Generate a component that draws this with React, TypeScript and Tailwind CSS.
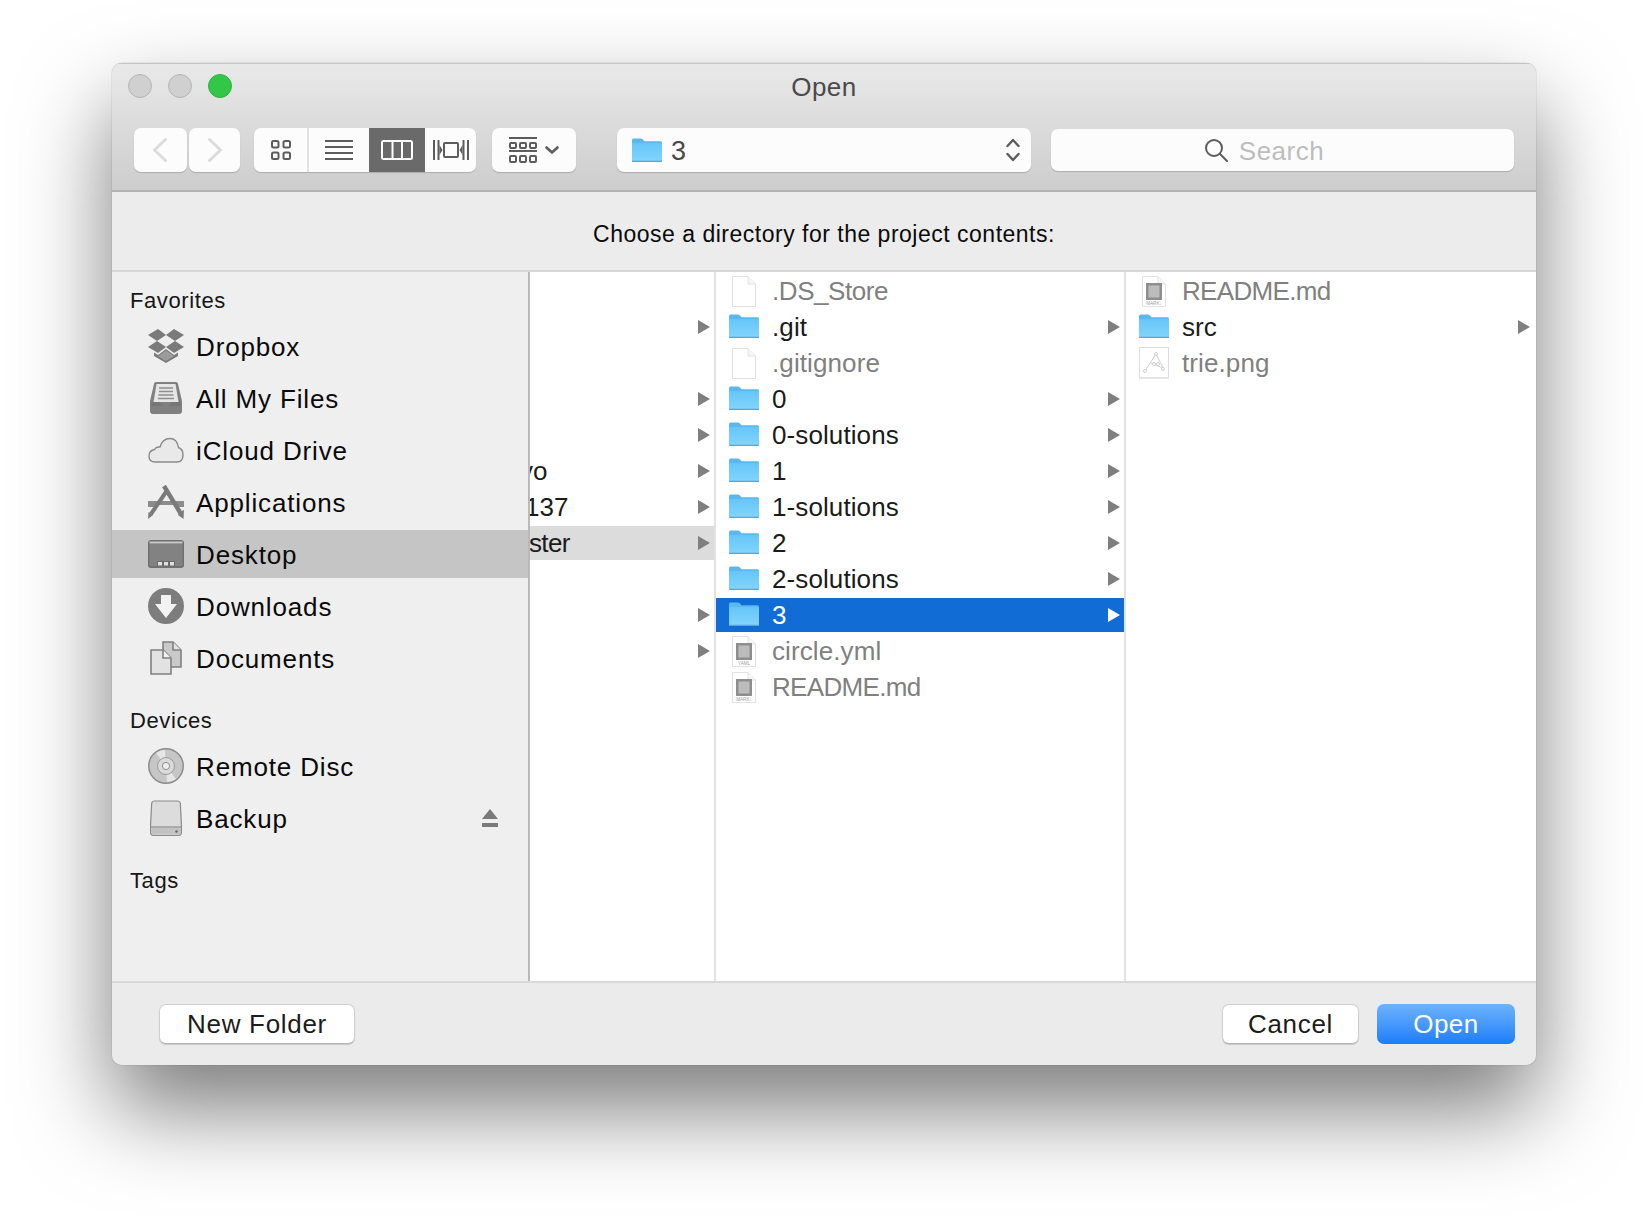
import React from "react";

const Folder = ({ className = "" }: { className?: string }) => (
  <svg viewBox="0 0 30 24" className={`w-[30px] h-[24px] shrink-0 ${className}`}>
    <defs>
      <linearGradient id="fg" x1="0" y1="0" x2="0" y2="1">
        <stop offset="0" stopColor="#66c6f8" />
        <stop offset="1" stopColor="#82d4fd" />
      </linearGradient>
    </defs>
    <path d="M0 2 Q0 0.5 1.5 0.5 H9 Q10.5 0.5 11.5 2 L12.5 3.2 H28.5 Q30 3.2 30 4.7 V22.5 Q30 24 28.5 24 H1.5 Q0 24 0 22.5 Z" fill="#5ab8ee" />
    <path d="M0 5 H30 V22 Q30 23.2 28.5 23.2 H1.5 Q0 23.2 0 22 Z" fill="url(#fg)" />
    <rect x="0" y="22.8" width="30" height="1.2" rx="0.6" fill="#5aa5d6" />
  </svg>
);

const Doc = ({ children }: { children?: React.ReactNode }) => (
  <svg viewBox="0 0 24 31" className="w-[24px] h-[31px] shrink-0">
    <path d="M0.5 0.5 H16 L23.5 8 V30.5 H0.5 Z" fill="#fff" stroke="#e2e2e2" />
    <path d="M16 0.5 V8 H23.5" fill="#f6f6f6" stroke="#e2e2e2" />
    {children}
  </svg>
);

const TextDoc = ({ label }: { label: string }) => (
  <Doc>
    <rect x="4" y="7" width="16" height="17" fill="#8e8e8e" />
    <rect x="6.5" y="9.5" width="11" height="12" fill="#bcbcbc" />
    <text x="12" y="29" textAnchor="middle" fontSize="4.6" fill="#a0a0a0" fontFamily="Liberation Sans, sans-serif">
      {label}
    </text>
  </Doc>
);

const PngDoc = () => (
  <svg viewBox="0 0 30 32" className="w-[30px] h-[32px] shrink-0">
    <rect x="0.5" y="0.5" width="29" height="30" fill="#fff" stroke="#dcdcdc" />
    <rect x="0" y="30.5" width="30" height="1.5" fill="#e8e8e8" />
    <g fill="none" stroke="#cfcfcf" strokeWidth="1">
      <path d="M17 7 L6 24 M17 7 L24 21 M12 16 L24 21" />
      <circle cx="17" cy="7" r="1.5" fill="#fff" />
      <circle cx="15" cy="17" r="1.5" fill="#fff" />
      <circle cx="19" cy="17" r="1.5" fill="#fff" />
      <circle cx="6" cy="24" r="1.5" fill="#fff" />
      <circle cx="24" cy="22" r="1.5" fill="#fff" />
    </g>
  </svg>
);

const Arrow = ({ white = false, right = "mr-[4px]" }: { white?: boolean; right?: string }) => (
  <svg viewBox="0 0 12 14" className={`w-[12px] h-[14px] shrink-0 ml-auto ${right}`}>
    <path d="M0 0 L12 7 L0 14 Z" fill={white ? "#ffffff" : "#7f7f7f"} />
  </svg>
);

const Dropbox = () => (
  <svg viewBox="0 0 36 34" className="w-[36px] h-[34px]" fill="#7a7a7a">
    <path d="M10 0 L18 6 L9 12 L0 6 Z" />
    <path d="M26 0 L36 6 L27 12 L18 6 Z" />
    <path d="M9 12 L18 18 L10 24 L0 18 Z" />
    <path d="M27 12 L36 18 L26 24 L18 18 Z" />
    <path d="M18 20 L26 26 L30 23.5 V27 L18 34 L6 27 V23.5 L10 26 Z" />
    <path d="M18 21.5 L10 27 L18 32 L26 27 Z" fill="#9c9c9c" />
  </svg>
);

const AllFiles = () => (
  <svg viewBox="0 0 32 32" className="w-[32px] h-[32px]">
    <path d="M4 2 Q4 0 6 0 H26 Q28 0 28 2 L32 19 V29 Q32 32 29 32 H3 Q0 32 0 29 V19 Z" fill="#808080" />
    <path d="M6.5 2 H25.5 L28.5 20 H3.5 Z" fill="#e6e6e6" />
    <path d="M9 6 H23 M9 9.5 H23 M8.5 13 H23.5 M8 16.5 H24" stroke="#8f8f8f" strokeWidth="1.4" />
    <path d="M1.5 20 H10 Q11 24 16 24 Q21 24 22 20 H30.5 V24 H1.5 Z" fill="#6e6e6e" opacity="0.55" />
  </svg>
);

const Cloud = () => (
  <svg viewBox="0 0 36 26" className="w-[36px] h-[26px]">
    <path d="M7 25 Q1 25 1 19 Q1 13.5 6.5 12.5 Q8 9.5 12 10 Q14.5 1.5 22 1.5 Q29 1.5 30.5 10.5 Q35 12 35 18 Q35 25 29 25 Z" fill="#e9e9e9" stroke="#8a8a8a" strokeWidth="1.4" />
  </svg>
);

const Apps = () => (
  <svg viewBox="0 0 36 34" className="w-[36px] h-[34px]">
    <path d="M6 16 H30 L36 16 V22 H30 L28 20 H8 L6 22 H0 V16 Z" fill="#8c8c8c" />
    <path d="M16 1 L33 29" stroke="#7a7a7a" strokeWidth="4.4" />
    <path d="M32 27 L36 25 L35.5 34 L30 30 Z" fill="#7a7a7a" />
    <path d="M18 7 L3 29" stroke="#7a7a7a" strokeWidth="4" />
    <path d="M0 34 L0.5 27 L5 30 Z" fill="#7a7a7a" />
  </svg>
);

const DesktopIcon = () => (
  <svg viewBox="0 0 36 28" className="w-[36px] h-[28px]">
    <rect x="0" y="0" width="36" height="28" rx="3" fill="#707070" />
    <rect x="1.5" y="1.5" width="33" height="2" fill="#c8c8c8" />
    <rect x="1.5" y="4" width="33" height="22" rx="1" fill="#828282" />
    <rect x="9" y="21" width="18" height="5" fill="#6a6a6a" />
    <rect x="10" y="22" width="4" height="3.5" fill="#e0e0e0" />
    <rect x="16" y="22" width="4" height="3.5" fill="#e0e0e0" />
    <rect x="22" y="22" width="4" height="3.5" fill="#e0e0e0" />
  </svg>
);

const DownloadIcon = () => (
  <svg viewBox="0 0 36 36" className="w-[36px] h-[36px]">
    <circle cx="18" cy="18" r="18" fill="#7d7d7d" />
    <path d="M13 7 H23 V16 H29 L18 30 L7 16 H13 Z" fill="#f2f2f2" />
  </svg>
);

const DocsIcon = () => (
  <svg viewBox="0 0 32 34" className="w-[32px] h-[34px]" stroke="#808080" strokeWidth="1.6">
    <path d="M13 1 H23 L31 9 V26 H13 Z" fill="#c9c9c9" />
    <path d="M23 1 V9 H31" fill="#e4e4e4" />
    <path d="M1 9 H13 L21 17 V33 H1 Z" fill="#e2e2e2" />
    <path d="M13 9 V17 H21" fill="#f2f2f2" />
  </svg>
);

const Disc = () => (
  <svg viewBox="0 0 36 36" className="w-[36px] h-[36px]">
    <circle cx="18" cy="18" r="17.2" fill="#c6c6c6" stroke="#8c8c8c" strokeWidth="1.5" />
    <path d="M18 18 L8 5 A17 17 0 0 1 17 2 Z M18 18 L28 31 A17 17 0 0 1 19 34 Z" fill="#e6e6e6" />
    <circle cx="18" cy="18" r="8.5" fill="#dadada" stroke="#9a9a9a" />
    <circle cx="18" cy="18" r="3.6" fill="#efefef" stroke="#8c8c8c" />
  </svg>
);

const Drive = () => (
  <svg viewBox="0 0 32 36" className="w-[32px] h-[36px]">
    <path d="M4 1 H28 Q30 1 30.3 3 L31.5 26 V32 Q31.5 35.5 28 35.5 H4 Q0.5 35.5 0.5 32 V26 L1.7 3 Q2 1 4 1 Z" fill="#dcdcdc" stroke="#8a8a8a" strokeWidth="1.2" />
    <path d="M1 27 H31" stroke="#8a8a8a" strokeWidth="1.2" />
    <rect x="1" y="28" width="30" height="6.5" rx="2" fill="#c2c2c2" />
    <circle cx="26.5" cy="31.5" r="1.2" fill="#666" />
  </svg>
);

const Eject = () => (
  <svg viewBox="0 0 16 18" className="w-[16px] h-[18px] shrink-0 ml-auto mr-[30px]" fill="#7a7a7a">
    <path d="M8 0 L16 10 H0 Z" />
    <rect x="0" y="14" width="16" height="4" />
  </svg>
);

type SideItem = { label: string; icon: React.ReactNode; selected?: boolean; eject?: boolean };

const SideRow = ({ label, icon, selected, eject }: SideItem) => (
  <div className={`flex items-center h-[48px] pl-[36px] ${selected ? "bg-[#c5c5c5]" : ""}`}>
    <div className="w-[36px] flex justify-center shrink-0">{icon}</div>
    <span className="ml-[12px] pt-[2px] text-[26px] tracking-[0.85px] text-[#0a0a0a]">{label}</span>
    {eject && <Eject />}
  </div>
);

const Header = ({ children, className = "" }: { children: React.ReactNode; className?: string }) => (
  <div className={`pl-[18px] text-[22px] tracking-[0.6px] leading-[28px] text-[#161616] ${className}`}>{children}</div>
);

type Row = { name: string; kind: "folder" | "blank" | "yml" | "md" | "png"; selected?: boolean; track?: string };

const FileRow = ({ name, kind, selected, pad, track, arrowRight }: Row & { pad: string; arrowRight?: string }) => {
  const isFolder = kind === "folder";
  return (
    <div className={`flex items-center h-[34px] ${pad} ${selected ? "bg-[#116cd6]" : ""}`}>
      <div className="w-[30px] h-[34px] flex justify-center items-center shrink-0">
        {isFolder && <Folder className="-mt-[2px]" />}
        {kind === "blank" && <Doc />}
        {kind === "yml" && <TextDoc label="YAML" />}
        {kind === "md" && <TextDoc label="MARK↓" />}
        {kind === "png" && <PngDoc />}
      </div>
      <span
        className={`ml-[13px] text-[26px] ${track ?? "tracking-[0.1px]"} ${
          selected ? "text-white" : isFolder ? "text-[#1b1b1b]" : "text-[#808080]"
        }`}
      >
        {name}
      </span>
      {isFolder && <Arrow white={selected} right={arrowRight} />}
    </div>
  );
};

const col2: Row[] = [
  { name: ".DS_Store", kind: "blank", track: "tracking-[-0.43px]" },
  { name: ".git", kind: "folder" },
  { name: ".gitignore", kind: "blank" },
  { name: "0", kind: "folder" },
  { name: "0-solutions", kind: "folder" },
  { name: "1", kind: "folder" },
  { name: "1-solutions", kind: "folder" },
  { name: "2", kind: "folder" },
  { name: "2-solutions", kind: "folder" },
  { name: "3", kind: "folder", selected: true },
  { name: "circle.yml", kind: "yml" },
  { name: "README.md", kind: "md", track: "tracking-[-0.67px]" },
];

const col3: Row[] = [
  { name: "README.md", kind: "md", track: "tracking-[-0.67px]" },
  { name: "src", kind: "folder" },
  { name: "trie.png", kind: "png" },
];

const col1: { text?: string; shift?: string; arrow?: boolean; selected?: boolean }[] = [
  {},
  { arrow: true },
  {},
  { arrow: true },
  { arrow: true },
  { text: "vo", shift: "-ml-[10px]", arrow: true },
  { text: "137", shift: "-ml-[5px]", arrow: true },
  { text: "master", shift: "-ml-[36px] tracking-[-0.6px]", arrow: true, selected: true },
  {},
  { arrow: true },
  { arrow: true },
];

const ToolBtn = ({
  className = "",
  bg = "bg-[#fcfcfc]",
  shadow = "shadow-[0_1px_1px_rgba(0,0,0,0.18)]",
  height = "h-[44px]",
  children,
}: {
  className?: string;
  bg?: string;
  shadow?: string;
  height?: string;
  children?: React.ReactNode;
}) => <div className={`flex items-center justify-center ${height} ${bg} ${shadow} ${className}`}>{children}</div>;

const FooterBtn = ({ children, className = "" }: { children: React.ReactNode; className?: string }) => (
  <div className={`h-[40px] rounded-[7px] bg-white border border-[#cfcfcf] border-b-[#b5b5b5] shadow-[0_1px_1px_rgba(0,0,0,0.15)] flex items-center justify-center text-[26px] tracking-[0.7px] text-[#1c1c1c] ${className}`}>
    {children}
  </div>
);

export default function App() {
  const sans = "font-['Liberation_Sans',Arial,sans-serif]";
  return (
    <div className={`w-[1648px] h-[1224px] bg-white pl-[112px] pt-[63px] overflow-hidden ${sans}`}>
      <div className="w-[1424px] h-[1002px] rounded-[10px] overflow-hidden flex flex-col bg-[#ececec] shadow-[0_44px_90px_rgba(0,0,0,0.52),0_0_1px_rgba(0,0,0,0.5)]">
        {/* Title bar */}
        <div className="h-[129px] shrink-0 flex flex-col bg-gradient-to-b from-[#e9e9e9] to-[#cdcdcd] border-t border-t-[#c4c4c4] border-b-2 border-b-[#b3b3b3]">
          <div className="relative h-[64px] shrink-0 flex items-start pt-[10px] pl-[16px] gap-[16px]">
            <div className="w-[24px] h-[24px] rounded-full bg-[#d0d0d0] border border-[#b5b5b5]" />
            <div className="w-[24px] h-[24px] rounded-full bg-[#d0d0d0] border border-[#b5b5b5]" />
            <div className="w-[24px] h-[24px] rounded-full bg-[#33c748] border border-[#2db440]" />
            <div className="absolute inset-x-0 top-[4px] text-center text-[26px] tracking-[0.5px] leading-[38px] text-[#4a4a4a]">Open</div>
          </div>
          <div className="flex items-center pl-[22px]">
            <ToolBtn className="w-[53px] rounded-[7px]">
              <svg viewBox="0 0 14 24" className="w-[14px] h-[24px] -ml-[2px]" fill="none" stroke="#dcdcdc" strokeWidth="3" strokeLinecap="round" strokeLinejoin="round">
                <path d="M12.5 1.5 L1.5 12 L12.5 22.5" />
              </svg>
            </ToolBtn>
            <ToolBtn className="w-[51px] ml-[2px] rounded-[7px]">
              <svg viewBox="0 0 14 24" className="w-[14px] h-[24px]" fill="none" stroke="#dcdcdc" strokeWidth="3" strokeLinecap="round" strokeLinejoin="round">
                <path d="M1.5 1.5 L12.5 12 L1.5 22.5" />
              </svg>
            </ToolBtn>
            <div className="flex ml-[14px] rounded-[7px] overflow-hidden shadow-[0_1px_1px_rgba(0,0,0,0.18)]">
              <ToolBtn className="w-[55px] border-r-2 border-[#e2e2e2]" shadow="">
                <svg viewBox="0 0 20 20" className="w-[20px] h-[20px]" fill="none" stroke="#5c5c5c" strokeWidth="2">
                  <rect x="1" y="1" width="6.5" height="6.5" rx="1.5" />
                  <rect x="12.5" y="1" width="6.5" height="6.5" rx="1.5" />
                  <rect x="1" y="12.5" width="6.5" height="6.5" rx="1.5" />
                  <rect x="12.5" y="12.5" width="6.5" height="6.5" rx="1.5" />
                </svg>
              </ToolBtn>
              <ToolBtn className="w-[60px]" shadow="">
                <svg viewBox="0 0 28 20" className="w-[28px] h-[20px]" fill="#5c5c5c">
                  <rect y="0" width="28" height="2" />
                  <rect y="6" width="28" height="2" />
                  <rect y="12" width="28" height="2" />
                  <rect y="18" width="28" height="2" />
                </svg>
              </ToolBtn>
              <ToolBtn className="w-[56px]" bg="bg-[#6a6a6a]" shadow="">
                <svg viewBox="0 0 32 20" className="w-[32px] h-[20px]" fill="none" stroke="#fff" strokeWidth="2">
                  <rect x="1" y="1" width="30" height="18" rx="1.5" />
                  <path d="M11.5 1 V19 M21 1 V19" />
                </svg>
              </ToolBtn>
              <ToolBtn className="w-[51px]" shadow="">
                <svg viewBox="0 0 36 20" className="w-[36px] h-[20px]" fill="#5c5c5c">
                  <rect x="0" y="0" width="2" height="20" />
                  <rect x="34" y="0" width="2" height="20" />
                  <rect x="4.5" y="0" width="2" height="20" />
                  <rect x="29.5" y="0" width="2" height="20" />
                  <path d="M6.5 5 L9.5 10 L6.5 15 Z M29.5 5 L26.5 10 L29.5 15 Z" />
                  <rect x="11" y="3" width="14" height="14" rx="1" fill="none" stroke="#5c5c5c" strokeWidth="2" />
                </svg>
              </ToolBtn>
            </div>
            <ToolBtn className="w-[84px] ml-[16px] rounded-[7px] gap-[8px]">
              <svg viewBox="0 0 28 26" className="w-[28px] h-[26px]" fill="none" stroke="#5c5c5c" strokeWidth="2">
                <path d="M0 1 H28 M0 14 H28" />
                <rect x="1" y="6" width="6" height="5" rx="1" />
                <rect x="11" y="6" width="6" height="5" rx="1" />
                <rect x="21" y="6" width="6" height="5" rx="1" />
                <rect x="1" y="19" width="6" height="6" rx="1" />
                <rect x="11" y="19" width="6" height="6" rx="1" />
                <rect x="21" y="19" width="6" height="6" rx="1" />
              </svg>
              <svg viewBox="0 0 14 8" className="w-[14px] h-[8px]" fill="none" stroke="#5c5c5c" strokeWidth="2.6" strokeLinecap="round" strokeLinejoin="round">
                <path d="M1.5 1.5 L7 6.5 L12.5 1.5" />
              </svg>
            </ToolBtn>
            <ToolBtn className="w-[414px] ml-[41px] rounded-[7px] !justify-start pl-[15px] pr-[11px]">
              <Folder />
              <span className="ml-[9px] pt-[2px] text-[27px] text-[#4a4a4a]">3</span>
              <svg viewBox="0 0 14 24" className="w-[14px] h-[24px] ml-auto" fill="none" stroke="#5c5c5c" strokeWidth="2.4" strokeLinecap="round" strokeLinejoin="round">
                <path d="M1.5 8 L7 2 L12.5 8 M1.5 16 L7 22 L12.5 16" />
              </svg>
            </ToolBtn>
            <ToolBtn className="w-[463px] ml-[20px] rounded-[7px] gap-[11px] pr-[37px]" height="h-[42px]">
              <svg viewBox="0 0 24 24" className="w-[24px] h-[24px]" fill="none" stroke="#5c5c5c" strokeWidth="2">
                <circle cx="10" cy="10" r="8" />
                <path d="M16 16 L23 23" strokeLinecap="round" />
              </svg>
              <span className="pt-[2px] text-[26px] tracking-[0.5px] text-[#bdbdbd]">Search</span>
            </ToolBtn>
          </div>
        </div>

        {/* Message */}
        <div className="h-[80px] shrink-0 flex items-center justify-center border-b-2 border-[#d6d6d6] bg-[#ececec] pt-[6px]">
          <span className="text-[23px] tracking-[0.5px] text-[#0a0a0a]">Choose a directory for the project contents:</span>
        </div>

        {/* Content */}
        <div className="h-[709px] shrink-0 flex bg-white">
          <div className="w-[418px] shrink-0 bg-[#efefef] border-r-2 border-[#b9b9b9]">
            <Header className="mt-[15px]">Favorites</Header>
            <div className="flex flex-col gap-[4px] mt-[7px]">
              <SideRow label="Dropbox" icon={<Dropbox />} />
              <SideRow label="All My Files" icon={<AllFiles />} />
              <SideRow label="iCloud Drive" icon={<Cloud />} />
              <SideRow label="Applications" icon={<Apps />} />
              <SideRow label="Desktop" icon={<DesktopIcon />} selected />
              <SideRow label="Downloads" icon={<DownloadIcon />} />
              <SideRow label="Documents" icon={<DocsIcon />} />
            </div>
            <Header className="mt-[25px]">Devices</Header>
            <div className="flex flex-col gap-[4px] mt-[7px]">
              <SideRow label="Remote Disc" icon={<Disc />} />
              <SideRow label="Backup" icon={<Drive />} eject />
            </div>
            <Header className="mt-[25px]">Tags</Header>
          </div>

          <div className="w-[186px] shrink-0 border-r-2 border-[#e2e2e2] flex flex-col gap-[2px] pt-[2px] overflow-hidden">
            {col1.map((r, i) => (
              <div key={i} className={`flex items-center h-[34px] shrink-0 ${r.selected ? "bg-[#dcdcdc]" : ""}`}>
                {r.text && <span className={`text-[26px] text-[#1b1b1b] ${r.shift}`}>{r.text}</span>}
                {r.arrow && <Arrow />}
              </div>
            ))}
          </div>

          <div className="w-[410px] shrink-0 border-r-2 border-[#e2e2e2] flex flex-col gap-[2px] pt-[2px]">
            {col2.map((r) => (
              <FileRow key={r.name} {...r} pad="pl-[13px]" />
            ))}
          </div>

          <div className="flex-1 flex flex-col gap-[2px] pt-[2px]">
            {col3.map((r) => (
              <FileRow key={r.name} {...r} pad="pl-[13px]" arrowRight="mr-[6px]" />
            ))}
          </div>
        </div>

        {/* Footer */}
        <div className="h-[84px] shrink-0 flex items-start pt-[21px] pl-[47px] pr-[21px] border-t-2 border-[#d9d9d9] bg-[#ebebeb]">
          <FooterBtn className="w-[196px]">New Folder</FooterBtn>
          <FooterBtn className="w-[137px] ml-auto">Cancel</FooterBtn>
          <div className="w-[138px] ml-[18px] h-[40px] rounded-[7px] bg-gradient-to-b from-[#6cb3fa] to-[#1a7dfb] flex items-center justify-center text-[26px] tracking-[0.5px] text-white">
            Open
          </div>
        </div>
      </div>
    </div>
  );
}
